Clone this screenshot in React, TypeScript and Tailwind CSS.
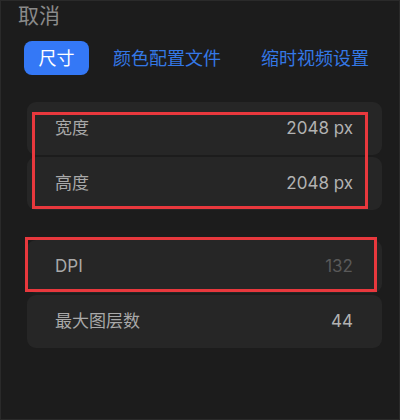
const font = { fontFamily: 'Inter, "Noto Sans CJK SC", sans-serif' }

type Row = { label: string; value: string; dim?: boolean }

function SettingRow({ label, value, dim }: Row) {
  return (
    <div className="flex h-[53px] items-center justify-between rounded-[9px] bg-[#262626] pl-[28px] pr-[29px] text-[17px]">
      <span className="text-[#a9a9a9]">{label}</span>
      <span className={dim ? 'text-[#595959]' : 'text-[#b2b2b2]'}>{value}</span>
    </div>
  )
}

export default function App() {
  return (
    <div
      className="h-[420px] w-[400px] overflow-hidden border border-[#2a2a2a] bg-[#1c1c1c]"
      style={font}
    >
      <div className="mt-[2px] pl-[17px] text-[21px] leading-[26px] text-[#8a8a8a]">取消</div>

      {/* tabs */}
      <div className="mt-[12px] flex items-center pl-[23px] text-[18px]">
        <div className="flex h-[34px] w-[65px] items-center justify-center rounded-[8px] bg-[#3478f6] text-white">
          尺寸
        </div>
        <span className="ml-[24px] text-[#3478e6]">颜色配置文件</span>
        <span className="ml-[40px] text-[#3478e6]">缩时视频设置</span>
      </div>

      {/* size group */}
      <div className="relative ml-[26px] mt-[27px] flex w-[355px] flex-col gap-[2px]">
        <SettingRow label="宽度" value="2048 px" />
        <SettingRow label="高度" value="2048 px" />
        <div className="pointer-events-none absolute left-[5px] top-[10px] h-[97px] w-[336px] border-[3px] border-[#e8383d]" />
      </div>

      {/* other group */}
      <div className="relative ml-[26px] mt-[30px] flex w-[355px] flex-col gap-[2px]">
        <SettingRow label="DPI" value="132" dim />
        <SettingRow label="最大图层数" value="44" />
        <div className="pointer-events-none absolute left-[-2px] top-[-3px] h-[55px] w-[352px] border-[3px] border-[#e8383d]" />
      </div>
    </div>
  )
}
